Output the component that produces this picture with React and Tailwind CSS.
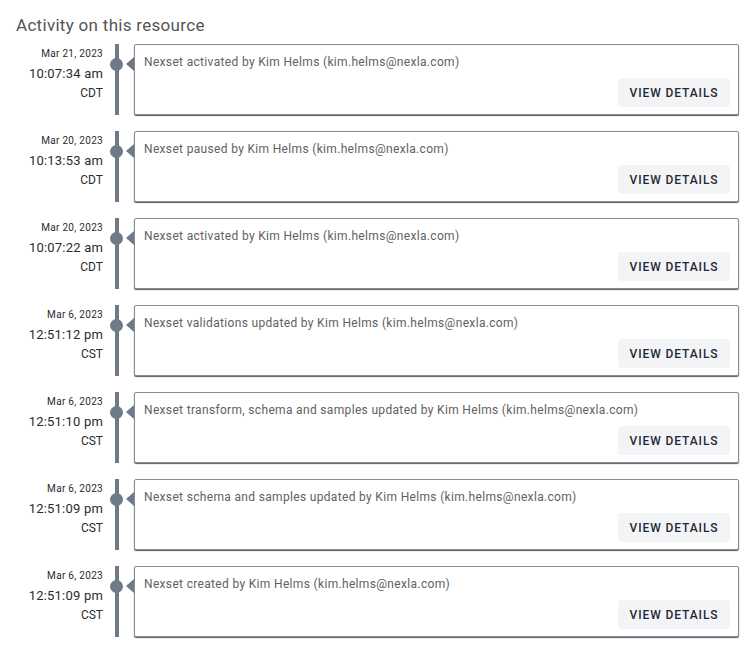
import React from 'react';

const activities = [
  { date: 'Mar 21, 2023', time: '10:07:34 am', tz: 'CDT', text: 'Nexset activated by Kim Helms (kim.helms@nexla.com)' },
  { date: 'Mar 20, 2023', time: '10:13:53 am', tz: 'CDT', text: 'Nexset paused by Kim Helms (kim.helms@nexla.com)' },
  { date: 'Mar 20, 2023', time: '10:07:22 am', tz: 'CDT', text: 'Nexset activated by Kim Helms (kim.helms@nexla.com)' },
  { date: 'Mar 6, 2023', time: '12:51:12 pm', tz: 'CST', text: 'Nexset validations updated by Kim Helms (kim.helms@nexla.com)' },
  { date: 'Mar 6, 2023', time: '12:51:10 pm', tz: 'CST', text: 'Nexset transform, schema and samples updated by Kim Helms (kim.helms@nexla.com)' },
  { date: 'Mar 6, 2023', time: '12:51:09 pm', tz: 'CST', text: 'Nexset schema and samples updated by Kim Helms (kim.helms@nexla.com)' },
  { date: 'Mar 6, 2023', time: '12:51:09 pm', tz: 'CST', text: 'Nexset created by Kim Helms (kim.helms@nexla.com)' },
];

const ActivityRow = ({ item, last }) => (
  <div className={`flex ${last ? '' : 'pb-4'}`}>
    {/* Timestamp */}
    <div className="w-[104px] shrink-0 pr-px text-right text-[#2b2b2b]">
      <p className="pt-[3px] text-[10px] leading-[13px] tracking-[0.3px]">{item.date}</p>
      <p className="mt-[6px] text-[13px] leading-[16px] tracking-[0.2px]">{item.time}</p>
      <p className="mt-[3px] text-[12px] leading-[16px]">{item.tz}</p>
    </div>

    {/* Timeline rail */}
    <div className="relative w-[30px] shrink-0">
      <div className="absolute left-[11px] top-0 bottom-0 w-[4px] bg-[#6f7a88]" />
      <div className="absolute left-[6px] top-[14px] h-[13px] w-[13px] rounded-full bg-[#6f7a88]" />
      <div className="absolute left-[22px] top-[13px] h-0 w-0 border-y-[7px] border-r-[8px] border-y-transparent border-r-[#6f7a88]" />
    </div>

    {/* Card */}
    <div className="flex h-[71px] w-[605px] flex-col justify-between rounded-[2px] border border-[#858c97] bg-white pl-[9px] pr-[8px] pt-[9px] pb-[7px] shadow-[0_1px_1px_rgba(17,24,39,0.7)]">
      <p className="text-[12px] leading-[16px] tracking-[0.33px] text-[#616161]">{item.text}</p>
      <div className="flex justify-end">
        <button className="h-[29px] w-[112px] rounded-[4px] bg-[#f3f4f6] text-[12px] font-medium tracking-[0.9px] text-[#1f2937]">
          VIEW DETAILS
        </button>
      </div>
    </div>
  </div>
);

export default function App() {
  return (
    <div className="min-h-screen bg-white pt-[13px]" style={{ fontFamily: 'Roboto, "Liberation Sans", sans-serif' }}>
      <h2 className="pl-[16px] text-[17px] leading-[24px] tracking-[0.3px] text-[#555]">Activity on this resource</h2>
      <div className="mt-[7px]">
        {activities.map((item, i) => (
          <ActivityRow key={i} item={item} last={i === activities.length - 1} />
        ))}
      </div>
    </div>
  );
}
